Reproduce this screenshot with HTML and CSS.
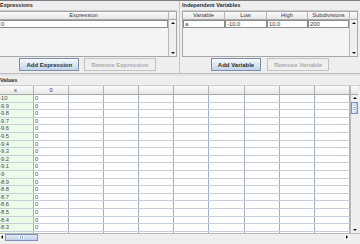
FILE: index.html
```html
<!DOCTYPE html>
<html lang="en">
<head>
    <meta charset="UTF-8">
    <meta name="viewport" content="width=device-width, initial-scale=1.0">
    <title>Function Table</title>
    <link rel="stylesheet" href="styles.css">
</head>
<body>
    <div class="frame">
        <div class="top">
            <div class="panel panel-expr">
                <div class="panel-title">Expressions</div>
                <div class="table-box">
                    <div class="table-main">
                        <div class="head-row">
                            <div class="head-cell expr-col">Expression</div>
                        </div>
                        <div class="edit-row">
                            <div class="edit-cell expr-col">0</div>
                        </div>
                    </div>
                    <div class="vscroll">
                        <div class="scroll-corner"></div>
                        <div class="arrow arrow-up"></div>
                        <div class="track"></div>
                        <div class="arrow arrow-down"></div>
                    </div>
                </div>
                <div class="buttons">
                    <button class="btn btn-default">Add Expression</button>
                    <button class="btn" disabled>Remove Expression</button>
                </div>
            </div>
            <div class="split-line"></div>
            <div class="panel panel-vars">
                <div class="panel-title">Independent Variables</div>
                <div class="table-box">
                    <div class="table-main">
                        <div class="head-row">
                            <div class="head-cell var-col">Variable</div>
                            <div class="head-cell low-col">Low</div>
                            <div class="head-cell high-col">High</div>
                            <div class="head-cell sub-col">Subdivisions</div>
                        </div>
                        <div class="edit-row">
                            <div class="edit-cell var-col">a</div>
                            <div class="edit-cell low-col">-10.0</div>
                            <div class="edit-cell high-col">10.0</div>
                            <div class="edit-cell sub-col">200</div>
                        </div>
                    </div>
                    <div class="vscroll">
                        <div class="scroll-corner"></div>
                        <div class="arrow arrow-up"></div>
                        <div class="track"></div>
                        <div class="arrow arrow-down"></div>
                    </div>
                </div>
                <div class="buttons">
                    <button class="btn btn-default">Add Variable</button>
                    <button class="btn" disabled>Remove Variable</button>
                </div>
            </div>
        </div>

        <div class="divider"></div>

        <div class="panel-title values-title">Values</div>
        <div class="values">
            <div class="values-head v-grid">
                <div class="v-head">x</div>
                <div class="v-head">0</div>
                <div class="v-head"></div>
                <div class="v-head"></div>
                <div class="v-head"></div>
                <div class="v-head"></div>
                <div class="v-head"></div>
                <div class="v-head"></div>
                <div class="v-head"></div>
                <div class="v-head"></div>
            </div>
            <div class="scroll-corner values-corner"></div>
            <div class="values-body" id="values-body"></div>
            <div class="vscroll values-scroll">
                <div class="arrow arrow-up"></div>
                <div class="thumb thumb-v"></div>
                <div class="track"></div>
                <div class="arrow arrow-down"></div>
            </div>
        </div>
        <div class="hscroll">
            <div class="harrow harrow-left"></div>
            <div class="thumb thumb-h"></div>
            <div class="track"></div>
            <div class="harrow harrow-right"></div>
            <div class="hcorner"></div>
        </div>
    </div>
    <script>
        const valuesBody = document.getElementById('values-body');
        for (let i = 0; i < 19; i++) {
            const x = Math.round((-10 + i * 0.1) * 10) / 10;
            const row = document.createElement('div');
            row.className = 'v-row v-grid';
            let cells = '<div class="v-cell v-x">' + x + '</div><div class="v-cell">0</div>';
            for (let c = 0; c < 8; c++) {
                cells += '<div class="v-cell"></div>';
            }
            row.innerHTML = cells;
            valuesBody.appendChild(row);
        }
    </script>
</body>
</html>
```

FILE: styles.css
```css
body {
    margin: 0;
    background-color: #eeeeee;
    font-family: "Liberation Sans", Arial, sans-serif;
    color: #333;
    overflow: hidden;
}

.frame {
    width: 362px;
    height: 244px;
    margin-left: -2px;
    border-top: 1px solid #7f7f7f;
    box-sizing: border-box;
    display: flex;
    flex-direction: column;
}

.top {
    display: flex;
    height: 72px;
    flex-shrink: 0;
}

.panel {
    display: flex;
    flex-direction: column;
    box-sizing: border-box;
}

.panel-expr {
    width: 182px;
    padding-right: 2px;
}

.split-line {
    width: 1px;
    background-color: #c4c4c4;
}

.panel-vars {
    flex: 1;
    padding: 0 2px;
}

.panel-title {
    height: 10px;
    box-sizing: border-box;
    border-bottom: 1px solid #cfcfcf;
    font-size: 5.5px;
    font-weight: bold;
    line-height: 9px;
    color: #2b2b2b;
    flex-shrink: 0;
}

.panel-expr .panel-title {
    padding-left: 2px;
}

.table-box {
    display: flex;
    height: 46px;
    box-sizing: border-box;
    border: 1px solid #a6a6a6;
    background-color: #f4f4f4;
}

.table-main {
    flex: 1;
}

.head-row,
.edit-row {
    display: flex;
    height: 8px;
}

.head-row {
    background: linear-gradient(#fbfbfb, #e6e6e6);
    border-bottom: 1px solid #a9a9a9;
    box-sizing: border-box;
}

.head-cell {
    box-sizing: border-box;
    border-right: 1px solid #b5b5b5;
    font-size: 5.8px;
    line-height: 7px;
    text-align: center;
    color: #3a3a3a;
}

.head-cell:last-child {
    border-right: none;
}

.edit-cell {
    box-sizing: border-box;
    height: 8px;
    border: 1px solid #8c8c8c;
    background-color: #fff;
    font-size: 5.8px;
    line-height: 6px;
    padding-left: 1px;
    color: #333;
}

.expr-col {
    flex: 1;
}

.var-col,
.low-col {
    width: 42px;
}

.high-col,
.sub-col {
    width: 41px;
}

.sub-col {
    flex: 1;
}

/* scrollbars */
.vscroll {
    width: 8px;
    display: flex;
    flex-direction: column;
    border-left: 1px solid #b9b9b9;
    box-sizing: border-box;
    background-color: #eeeeee;
}

.scroll-corner {
    height: 8px;
    box-sizing: border-box;
    background: linear-gradient(#fbfbfb, #e6e6e6);
    border-bottom: 1px solid #a9a9a9;
}

.arrow,
.harrow {
    position: relative;
    height: 7px;
    flex-shrink: 0;
    background-color: #f2f2f2;
}

.arrow::after,
.harrow::after {
    content: "";
    position: absolute;
    width: 0;
    height: 0;
}

.arrow-up::after {
    left: 2px;
    top: 2px;
    border-left: 2px solid transparent;
    border-right: 2px solid transparent;
    border-bottom: 2px solid #111;
}

.arrow-down::after {
    left: 2px;
    top: 3px;
    border-left: 2px solid transparent;
    border-right: 2px solid transparent;
    border-top: 2px solid #111;
}

.track {
    flex: 1;
}

.thumb {
    box-sizing: border-box;
    border: 1px solid #7d91b8;
    background: linear-gradient(90deg, #e2ecf7, #c3d6ea);
}

.thumb-v {
    height: 12px;
    flex-shrink: 0;
    background:
        repeating-linear-gradient(#ffffff 0 1px, #94a9cc 1px 2px) center / 3px 5px no-repeat,
        linear-gradient(90deg, #e2ecf7, #bdd1e8);
}

/* buttons */
.buttons {
    display: flex;
    justify-content: center;
    gap: 5px;
    padding-top: 1px;
}

.btn {
    height: 13px;
    padding: 0 6px;
    box-sizing: border-box;
    font-family: "Liberation Sans", Arial, sans-serif;
    font-size: 6px;
    font-weight: bold;
    color: #2f2f2f;
    border: 1px solid #a7a7a7;
    border-radius: 0;
    background-color: #efefef;
}

.btn-default {
    border-color: #7d8ea8;
    background: linear-gradient(#f7fafd, #dde8f3 45%, #c3d5e9);
}

.btn:disabled {
    color: #ababab;
    border-color: #c2c2c2;
}

.panel-vars .buttons {
    gap: 6px;
}

.divider {
    height: 3px;
    flex-shrink: 0;
    box-sizing: border-box;
    border-top: 1px solid #bcbcbc;
    background-color: #e4e4e4;
}

.values-title {
    padding-left: 2px;
}

/* values table */
.values {
    display: grid;
    grid-template-columns: 352px 8px;
    grid-template-rows: 9px 138px;
    flex-shrink: 0;
}

.v-grid {
    display: grid;
    grid-template-columns: 36px repeat(9, 35.1px);
}

.values-head {
    background: linear-gradient(#fbfbfb, #e6e6e6);
    border-bottom: 1px solid #a9a9a9;
    box-sizing: border-box;
}

.v-head {
    border-right: 1px solid #b0b0b0;
    font-size: 5.8px;
    line-height: 8px;
    text-align: center;
    color: #3a3a3a;
}

.values-corner {
    height: 9px;
    border-left: 1px solid #b9b9b9;
}

.values-body {
    overflow: hidden;
    background-color: #fff;
}

.v-row {
    height: 7.6px;
    box-sizing: border-box;
    border-bottom: 1px solid #c6cedb;
}

.v-cell {
    border-right: 1px solid #a3afc2;
    font-size: 5.8px;
    line-height: 6.6px;
    padding-left: 1px;
    color: #4a4a4a;
    overflow: hidden;
}

.v-x {
    background-color: #eafbe8;
}

.values-scroll {
    border-left: 1px solid #b9b9b9;
}

.hscroll {
    display: flex;
    height: 8px;
    flex-shrink: 0;
    border-top: 1px solid #b9b9b9;
    box-sizing: border-box;
}

.harrow {
    width: 7px;
    height: auto;
}

.harrow-left::after {
    left: 3px;
    top: 1px;
    border-top: 2px solid transparent;
    border-bottom: 2px solid transparent;
    border-right: 2px solid #111;
}

.harrow-right::after {
    left: 3px;
    top: 1px;
    border-top: 2px solid transparent;
    border-bottom: 2px solid transparent;
    border-left: 2px solid #111;
}

.thumb-h {
    width: 33px;
    background:
        repeating-linear-gradient(90deg, #ffffff 0 1px, #94a9cc 1px 2px) center / 5px 3px no-repeat,
        linear-gradient(#e2ecf7, #bdd1e8);
}

.hcorner {
    width: 10px;
    background-color: #eeeeee;
}
```
